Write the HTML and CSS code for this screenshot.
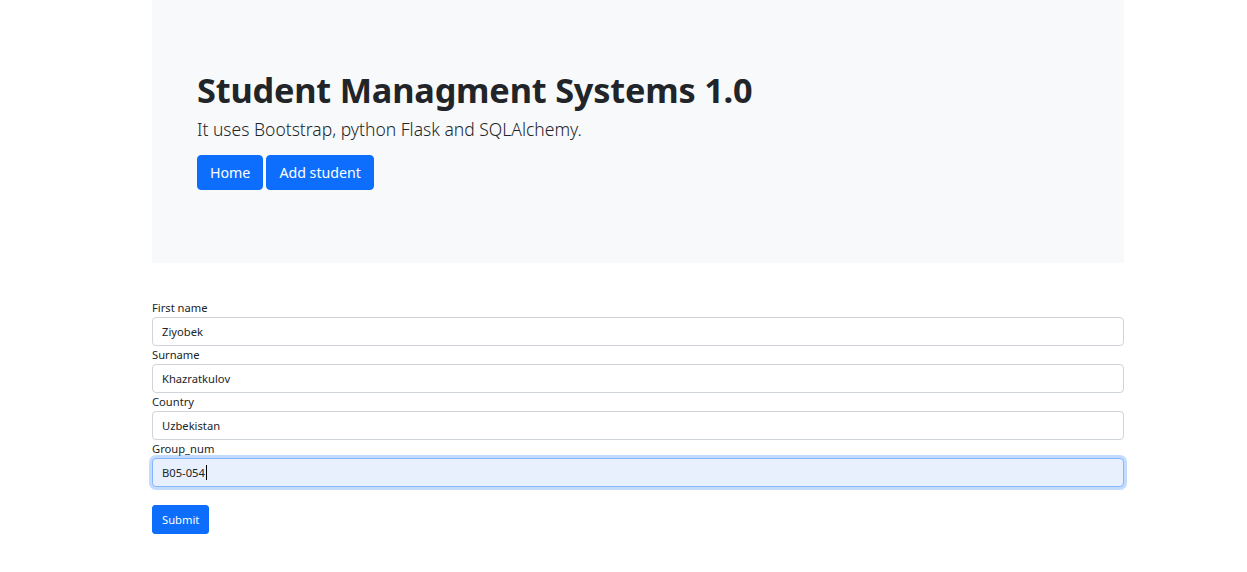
FILE: index.html
```html
<!DOCTYPE html>
<html lang="en">
<head>
<meta charset="utf-8">
<title>Student Managment Systems</title>
<link rel="stylesheet" href="styles.css">
</head>
<body>
<div class="container">
  <div class="jumbotron">
    <h1 class="title">Student Managment Systems 1.0</h1>
    <p class="lead">It uses Bootstrap, python Flask and SQLAlchemy.</p>
    <div class="nav-buttons">
      <a class="btn" href="#">Home</a>
      <a class="btn" href="#">Add student</a>
    </div>
  </div>
  <form class="student-form">
    <div class="field">
      <label class="label" for="fn">First name</label>
      <input class="input" id="fn" type="text" value="Ziyobek">
    </div>
    <div class="field">
      <label class="label" for="sn">Surname</label>
      <input class="input" id="sn" type="text" value="Khazratkulov">
    </div>
    <div class="field">
      <label class="label" for="co">Country</label>
      <input class="input" id="co" type="text" value="Uzbekistan">
    </div>
    <div class="field">
      <label class="label" for="gn">Group_num</label>
      <div class="input input-focus"><span>B05-054</span><span class="caret"></span></div>
    </div>
    <button class="btn btn-sm" type="button">Submit</button>
  </form>
</div>
</body>
</html>
```
FILE: styles.css
```css
* { box-sizing: border-box; }
body {
  margin: 0;
  font-family: "Noto Sans", "Open Sans", sans-serif;
  color: #212529;
  background: #fff;
}
.container {
  width: 972px;
  margin-left: 152px;
}
.jumbotron {
  background: #f8f9fa;
  height: 263px;
  padding: 69px 45px 0 45px;
}
.title {
  margin: 0;
  font-size: 34.3px;
  font-weight: 700;
  line-height: 1.2;
  letter-spacing: -0.2px;
}
.lead {
  margin: 6px 0 13px;
  font-size: 17.5px;
  font-weight: 300;
  line-height: 1.5;
}
.nav-buttons {
  display: flex;
  gap: 3px;
}
.btn {
  display: inline-flex;
  align-items: center;
  justify-content: center;
  height: 35px;
  padding: 0 12px;
  background: #0d6efd;
  color: #fff;
  border: 1px solid #0d6efd;
  border-radius: 4px;
  font-family: inherit;
  font-size: 14.2px;
  text-decoration: none;
}
.student-form {
  padding-top: 36px;
}
.field {
  display: flex;
  flex-direction: column;
}
.label {
  font-size: 11.2px;
  line-height: 18px;
  height: 18px;
}
.input {
  height: 29px;
  border: 1px solid #ced4da;
  border-radius: 4px;
  padding: 0 9px;
  font-family: inherit;
  font-size: 11.2px;
  color: #212529;
  background: #fff;
  outline: none;
}
.input-focus {
  display: flex;
  align-items: center;
  background: #e8f0fe;
  border-color: #86b7fe;
  box-shadow: 0 0 0 3px rgba(13, 110, 253, 0.25);
}
.caret {
  display: inline-block;
  width: 1px;
  height: 15px;
  background: #000;
  margin-left: 1px;
}
.btn-sm {
  margin-top: 18px;
  height: 29px;
  padding: 0 9px;
  font-size: 11.2px;
  border-radius: 3px;
}
```
